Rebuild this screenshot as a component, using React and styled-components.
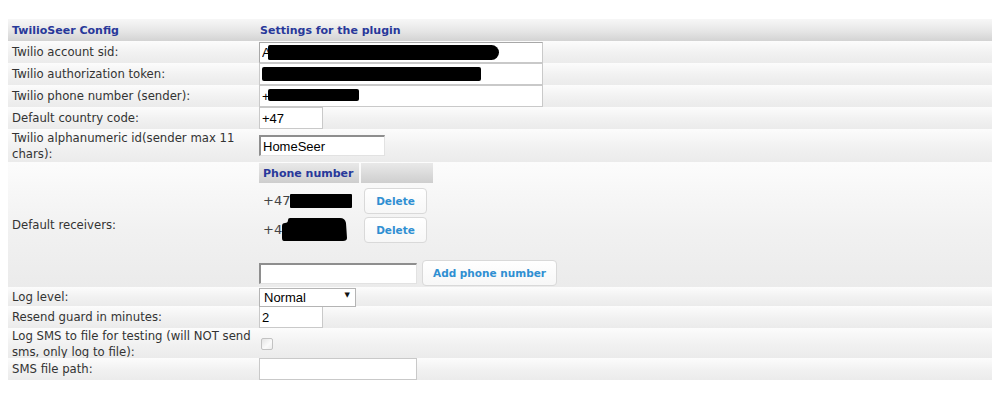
import React from 'react';
import styled, { createGlobalStyle } from 'styled-components';

const Global = createGlobalStyle`
  html, body { margin: 0; padding: 0; background: #fff; }
  body {
    padding: 19px 8px 0;
    font-family: "DejaVu Sans", Verdana, sans-serif;
  }
`;

const Config = styled.div`
  display: flex;
  flex-direction: column;
  width: 984px;
`;

const Row = styled.div`
  display: grid;
  grid-template-columns: 250px 1fr;
  align-items: center;
  height: ${(p) => p.$h}px;
  background: linear-gradient(to bottom, #fcfcfc 0%, #f1f1f1 55%, #ebebeb 100%);
`;

const HeadRow = styled(Row)`
  background: linear-gradient(to bottom, #f7f7f7 0%, #e6e6e6 55%, #d3d3d3 100%);
`;

const HeadCell = styled.div`
  font-weight: bold;
  font-size: 11px;
  color: #28389a;
  white-space: nowrap;
  padding-left: ${(p) => p.$pl}px;
`;

const Label = styled.div`
  font-size: 11.7px;
  line-height: 16px;
  color: #333;
  padding-left: 4px;
  white-space: nowrap;
`;

const Value = styled.div`
  display: flex;
  align-items: center;
  height: 100%;
`;

const FieldWrap = styled.div`
  position: relative;
  display: inline-block;
`;

const TextInput = styled.input`
  box-sizing: border-box;
  width: ${(p) => p.$w}px;
  height: ${(p) => p.$h || 22}px;
  margin: 0 0 0 ${(p) => (p.$flush ? 0 : 1)}px;
  padding: 1px 2px;
  font-family: "Liberation Sans", Arial, sans-serif;
  font-size: 13px;
  color: #000;
  background: #fff;
  border: 1px solid #c9c9c9;
  ${(p) => p.$inset && `
    border-top: 2px solid #8e8e8e;
    border-left: 2px solid #8e8e8e;
    border-right: 1px solid #e2e2e2;
    border-bottom: 1px solid #e2e2e2;
  `}
  ${(p) => p.$soft && `
    border-top-color: #a8a8a8;
    border-left-color: #a8a8a8;
  `}
  outline: none;
`;

const Redact = styled.span`
  position: absolute;
  left: ${(p) => p.$l}px;
  top: ${(p) => p.$t}px;
  width: ${(p) => p.$w}px;
  height: ${(p) => p.$hh}px;
  background: #000;
  border-radius: ${(p) => p.$r || '2px'};
`;

const SelectWrap = styled.div`
  position: relative;
  display: inline-block;
  margin-left: 1px;
`;

const Select = styled.select`
  appearance: none;
  box-sizing: border-box;
  width: 97px;
  height: 19px;
  padding: 0 0 0 4px;
  font-family: "Liberation Sans", Arial, sans-serif;
  font-size: 13px;
  color: #000;
  background: #fff;
  border: 1px solid #b4b4b4;
  border-radius: 0;
  outline: none;
`;

const Arrow = styled.span`
  position: absolute;
  right: 6px;
  top: 4px;
  font-size: 7px;
  color: #111;
  pointer-events: none;
`;

const Check = styled.span`
  display: inline-block;
  box-sizing: border-box;
  width: 12px;
  height: 12px;
  margin-left: 3px;
  border: 1px solid #c2c2c2;
  border-radius: 2px;
  background: linear-gradient(135deg, #e4e4e4, #fafafa 60%, #ececec);
`;

const Receivers = styled.div`
  display: flex;
  flex-direction: column;
  padding: 1px 0 0 1px;
  height: 100%;
  box-sizing: border-box;
`;

const PhoneGrid = styled.div`
  display: grid;
  grid-template-columns: 100px 72px;
  column-gap: 2px;
`;

const PhoneHead = styled.div`
  height: 20px;
  margin-bottom: 3px;
  display: flex;
  align-items: center;
  padding-left: 4px;
  font-weight: bold;
  font-size: 11px;
  white-space: nowrap;
  color: #28389a;
  background: linear-gradient(to bottom, #e9e9e9 0%, #d9d9d9 60%, #cecece 100%);
`;

const PhoneCell = styled.div`
  height: 29px;
  display: flex;
  align-items: center;
  padding-left: 4px;
  font-size: 13px;
  color: #444;
`;

const BtnCell = styled.div`
  height: 29px;
  display: flex;
  align-items: center;
  padding-left: 3px;
`;

const Blot = styled.span`
  display: inline-block;
  width: ${(p) => p.$w}px;
  height: ${(p) => p.$h}px;
  background: #000;
  border-radius: 1px;
`;

const Button = styled.button`
  box-sizing: border-box;
  width: ${(p) => p.$w}px;
  height: 26px;
  padding: 0;
  font-family: "DejaVu Sans", Verdana, sans-serif;
  font-weight: bold;
  font-size: 10.5px;
  color: #2f8fd2;
  background: linear-gradient(to bottom, #ffffff, #f7f7f7);
  border: 1px solid #d9d9d9;
  border-radius: 4px;
  cursor: pointer;
`;

const AddRow = styled.div`
  display: flex;
  align-items: center;
  gap: 5px;
  margin-top: auto;
  margin-bottom: 1px;
`;

function BlobSvg() {
  return (
    <svg width="66" height="24" viewBox="0 0 66 24" style={{ display: 'block' }}>
      <path d="M8 0 H58 Q63 0 64 5 L65 20 Q65 23 61 23 H2 Q0 23 0 20 V8 Q0 5 3 5 Q6 5 6 2 Q6 0 8 0 Z" fill="#000" />
    </svg>
  );
}

export default function App() {
  return (
    <>
      <Global />
      <Config>
        <HeadRow $h={22}>
          <HeadCell $pl={4}>TwilioSeer Config</HeadCell>
          <HeadCell $pl={2}>Settings for the plugin</HeadCell>
        </HeadRow>

        <Row $h={22}>
          <Label>Twilio account sid:</Label>
          <Value>
            <FieldWrap>
              <TextInput $w={284} $h={21} $soft defaultValue="A" />
              <Redact $l={10} $t={3} $w={231} $hh={15} $r="2px 8px 8px 2px" />
            </FieldWrap>
          </Value>
        </Row>

        <Row $h={22}>
          <Label>Twilio authorization token:</Label>
          <Value>
            <FieldWrap>
              <TextInput $w={284} defaultValue="" />
              <Redact $l={4} $t={4} $w={219} $hh={14} />
            </FieldWrap>
          </Value>
        </Row>

        <Row $h={22}>
          <Label>Twilio phone number (sender):</Label>
          <Value>
            <FieldWrap>
              <TextInput $w={284} defaultValue="+" />
              <Redact $l={10} $t={4} $w={91} $hh={12} />
            </FieldWrap>
          </Value>
        </Row>

        <Row $h={22}>
          <Label>Default country code:</Label>
          <Value>
            <TextInput $w={64} defaultValue="+47" />
          </Value>
        </Row>

        <Row $h={33}>
          <Label>
            Twilio alphanumeric id(sender max 11
            <br />
            chars):
          </Label>
          <Value>
            <TextInput $w={126} $h={21} $inset defaultValue="HomeSeer" />
          </Value>
        </Row>

        <Row $h={125}>
          <Label>Default receivers:</Label>
          <Receivers>
            <PhoneGrid>
              <PhoneHead>Phone number</PhoneHead>
              <PhoneHead />
              <PhoneCell>
                +47<Blot $w={62} $h={14} />
              </PhoneCell>
              <BtnCell>
                <Button $w={63}>Delete</Button>
              </BtnCell>
              <PhoneCell>
                +4<BlobSvg />
              </PhoneCell>
              <BtnCell>
                <Button $w={63}>Delete</Button>
              </BtnCell>
            </PhoneGrid>
            <AddRow>
              <TextInput $w={158} $h={21} $inset $flush defaultValue="" />
              <Button $w={135}>Add phone number</Button>
            </AddRow>
          </Receivers>
        </Row>

        <Row $h={19}>
          <Label>Log level:</Label>
          <Value>
            <SelectWrap>
              <Select defaultValue="Normal">
                <option>Normal</option>
                <option>Debug</option>
              </Select>
              <Arrow>▼</Arrow>
            </SelectWrap>
          </Value>
        </Row>

        <Row $h={22}>
          <Label>Resend guard in minutes:</Label>
          <Value>
            <TextInput $w={64} defaultValue="2" />
          </Value>
        </Row>

        <Row $h={30}>
          <Label>
            Log SMS to file for testing (will NOT send
            <br />
            sms, only log to file):
          </Label>
          <Value>
            <Check />
          </Value>
        </Row>

        <Row $h={22}>
          <Label>SMS file path:</Label>
          <Value>
            <TextInput $w={158} defaultValue="" />
          </Value>
        </Row>
      </Config>
    </>
  );
}
